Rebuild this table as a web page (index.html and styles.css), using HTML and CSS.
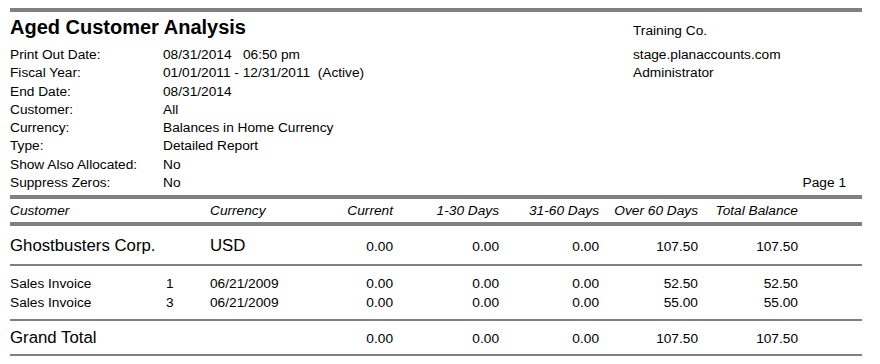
FILE: index.html
```html
<!DOCTYPE html>
<html>
<head>
<meta charset="utf-8">
<link rel="stylesheet" href="styles.css">
</head>
<body>
<div class="page">
  <div class="rule thick"></div>
  <div class="head">
    <div class="head-left">
      <h1 class="title">Aged Customer Analysis</h1>
      <div class="params">
        <span>Print Out Date:</span><span>08/31/2014&nbsp;&nbsp;&nbsp;06:50 pm</span>
        <span>Fiscal Year:</span><span>01/01/2011 - 12/31/2011&nbsp;&nbsp;(Active)</span>
        <span>End Date:</span><span>08/31/2014</span>
        <span>Customer:</span><span>All</span>
        <span>Currency:</span><span>Balances in Home Currency</span>
        <span>Type:</span><span>Detailed Report</span>
        <span>Show Also Allocated:</span><span>No</span>
        <span>Suppress Zeros:</span><span>No</span>
      </div>
    </div>
    <div class="head-right">
      <div class="company">Training Co.</div>
      <div>stage.planaccounts.com</div>
      <div>Administrator</div>
      <div class="pageno">Page 1</div>
    </div>
  </div>
  <div class="rule thick"></div>
  <div class="row colhead">
    <span class="span2">Customer</span>
    <span>Currency</span>
    <span class="num">Current</span>
    <span class="num">1-30 Days</span>
    <span class="num">31-60 Days</span>
    <span class="num">Over 60 Days</span>
    <span class="num">Total Balance</span>
  </div>
  <div class="rule thick"></div>
  <div class="row group">
    <span class="span2 big">Ghostbusters Corp.</span>
    <span class="big">USD</span>
    <span class="num">0.00</span>
    <span class="num">0.00</span>
    <span class="num">0.00</span>
    <span class="num">107.50</span>
    <span class="num">107.50</span>
  </div>
  <div class="rule thin"></div>
  <div class="lines">
    <div class="row line">
      <span>Sales Invoice</span>
      <span class="docno">1</span>
      <span>06/21/2009</span>
      <span class="num">0.00</span>
      <span class="num">0.00</span>
      <span class="num">0.00</span>
      <span class="num">52.50</span>
      <span class="num">52.50</span>
    </div>
    <div class="row line">
      <span>Sales Invoice</span>
      <span class="docno">3</span>
      <span>06/21/2009</span>
      <span class="num">0.00</span>
      <span class="num">0.00</span>
      <span class="num">0.00</span>
      <span class="num">55.00</span>
      <span class="num">55.00</span>
    </div>
  </div>
  <div class="rule thin"></div>
  <div class="row total">
    <span class="span2 big">Grand Total</span>
    <span></span>
    <span class="num">0.00</span>
    <span class="num">0.00</span>
    <span class="num">0.00</span>
    <span class="num">107.50</span>
    <span class="num">107.50</span>
  </div>
  <div class="rule thin"></div>
</div>
</body>
</html>
```
FILE: styles.css
```css
html, body {
  margin: 0;
  padding: 0;
  background: #ffffff;
}
body {
  font-family: "Liberation Sans", Arial, sans-serif;
  font-size: 13.7px;
  color: #000000;
}
.page {
  margin: 8px 0 0 10px;
  width: 852px;
}
.rule {
  background: #808080;
}
.rule.thick {
  height: 4px;
}
.rule.thin {
  height: 2px;
}
.head {
  display: grid;
  grid-template-columns: 623px 1fr;
  padding-bottom: 3px;
}
.title {
  margin: 3px 0 7px 0;
  font-size: 20px;
  line-height: 24px;
  font-weight: bold;
}
.params {
  display: grid;
  grid-template-columns: 153px 1fr;
  line-height: 18.3px;
}
.head-right {
  display: flex;
  flex-direction: column;
  padding-top: 10px;
  line-height: 18.3px;
}
.company {
  margin-bottom: 5.7px;
}
.pageno {
  margin-top: auto;
  text-align: right;
  padding-right: 16px;
}
.row {
  display: grid;
  grid-template-columns: 155px 45px 100px 83px 106px 100px 99px 100px 1fr;
  align-items: baseline;
}
.span2 {
  grid-column: span 2;
}
.num {
  text-align: right;
}
.colhead {
  font-style: italic;
  line-height: 23px;
}
.big {
  font-size: 16.8px;
}
.group {
  padding: 10px 0 6.5px 0;
  line-height: 20px;
}
.lines {
  padding: 9px 0 7px 0;
}
.line {
  line-height: 18.7px;
}
.docno {
  padding-left: 1px;
}
.total {
  padding: 7px 0 5px 0;
  line-height: 20px;
}
```
